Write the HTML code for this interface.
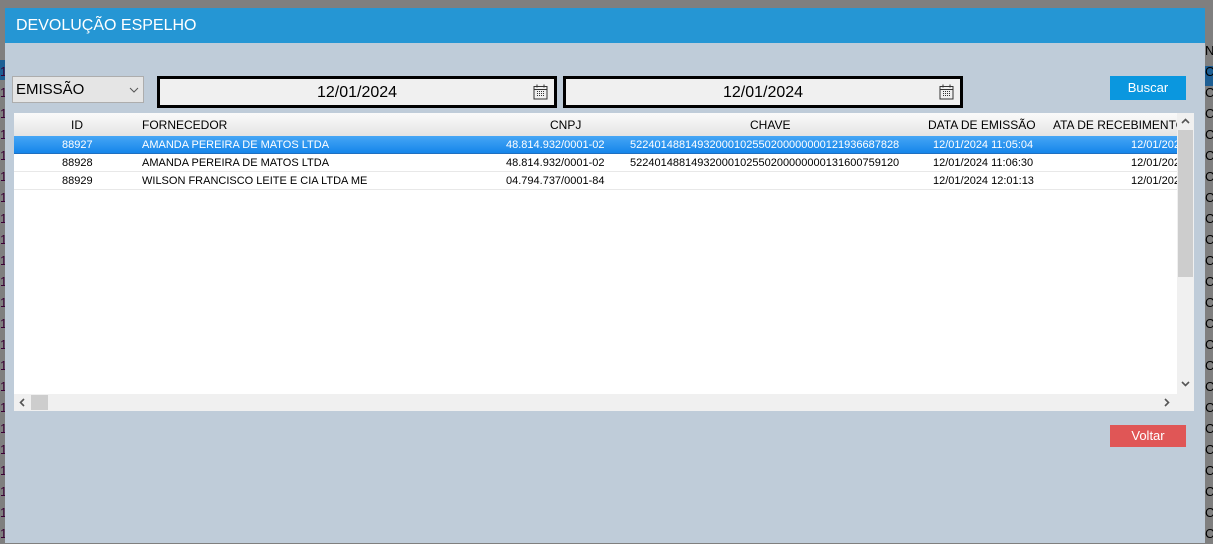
<!DOCTYPE html>
<html><head><meta charset="utf-8">
<style>
*{margin:0;padding:0;box-sizing:border-box}
body{width:1213px;height:543px;overflow:hidden;background:#7f7f7f;font-family:"Liberation Sans",sans-serif;position:relative}
.abs{position:absolute}
.dlg{left:5px;top:8px;width:1200px;height:535px;background:#bfccd9}
.title{left:5px;top:8px;width:1200px;height:35px;background:#2596d4;color:#fff;font-size:16px;line-height:35px;padding-left:11px}
.combo{left:12px;top:76px;width:132px;height:27px;background:#e5e5e5;border:1px solid #adadad;font-size:15px;line-height:25px;padding-left:3px;color:#000}
.date{top:76px;width:400px;height:32px;background:#f0f0f0;border:3px solid #000;font-size:16px;text-align:center;line-height:28px}
.btn{width:76px;height:24px;color:#fff;font-size:13px;text-align:center;line-height:24px}
.grid{left:14px;top:113px;width:1180px;height:298px;background:#fff;overflow:hidden}
.hdr{left:0;top:0;width:1163px;height:23px;background:linear-gradient(#fafafa,#e4e4e4);font-size:12px;color:#000}
.hdr span,.row span{position:absolute;white-space:nowrap}
.row{left:0;width:1163px;height:18px;font-size:11px;line-height:18px;border-bottom:1px solid #e8e8e8;color:#000}
.sel{background:linear-gradient(#46a6f5,#1585ea);color:#fff;border-bottom:1px solid #1f6fc0}
.strip{font-size:13px;color:#3a0035;line-height:21px}
</style></head><body>
<div class="abs" style="left:0;top:60px;width:5px;height:20px;background:#1e5f94"></div>
<div class="abs strip" style="left:0;top:61px;width:5px;overflow:hidden">1<br>1<br>1<br>1<br>1<br>1<br>1<br>1<br>1<br>1<br>1<br>1<br>1<br>1<br>1<br>1<br>1<br>1<br>1<br>1<br>1<br>1<br>1</div>
<div class="abs" style="left:1205px;top:66px;width:8px;height:20px;background:#1e5f94"></div>
<div class="abs strip" style="left:1205px;top:40px;width:8px;overflow:hidden;color:#000">N<br>C<br>C<br>C<br>C<br>C<br>C<br>C<br>C<br>C<br>C<br>C<br>C<br>C<br>C<br>C<br>C<br>C<br>C<br>C<br>C<br>C<br>C<br>C</div>
<div class="abs dlg"></div>
<div class="abs title">DEVOLUÇÃO ESPELHO</div>
<div class="abs combo">EMISSÃO
<svg class="abs" style="left:116px;top:10px" width="10" height="6" viewBox="0 0 10 6"><path d="M1 1 L5 5 L9 1" stroke="#555" fill="none" stroke-width="1"/></svg></div>
<div class="abs date" style="left:157px">12/01/2024
<svg class="abs" style="right:6px;top:5px" width="15" height="16" viewBox="0 0 15 16"><rect x="1" y="2.5" width="13" height="12.5" fill="none" stroke="#333"/><line x1="1" y1="5.5" x2="14" y2="5.5" stroke="#333"/><line x1="4" y1="0.5" x2="4" y2="3.5" stroke="#333"/><line x1="11" y1="0.5" x2="11" y2="3.5" stroke="#333"/><g fill="#333"><rect x="4" y="7" width="1" height="1"/><rect x="6" y="7" width="1" height="1"/><rect x="8" y="7" width="1" height="1"/><rect x="10" y="7" width="1" height="1"/><rect x="4" y="9" width="1" height="1"/><rect x="6" y="9" width="1" height="1"/><rect x="8" y="9" width="1" height="1"/><rect x="10" y="9" width="1" height="1"/><rect x="4" y="11" width="1" height="1"/><rect x="6" y="11" width="1" height="1"/><rect x="8" y="11" width="1" height="1"/><rect x="10" y="11" width="1" height="1"/></g></svg></div>
<div class="abs date" style="left:563px">12/01/2024
<svg class="abs" style="right:6px;top:5px" width="15" height="16" viewBox="0 0 15 16"><rect x="1" y="2.5" width="13" height="12.5" fill="none" stroke="#333"/><line x1="1" y1="5.5" x2="14" y2="5.5" stroke="#333"/><line x1="4" y1="0.5" x2="4" y2="3.5" stroke="#333"/><line x1="11" y1="0.5" x2="11" y2="3.5" stroke="#333"/><g fill="#333"><rect x="4" y="7" width="1" height="1"/><rect x="6" y="7" width="1" height="1"/><rect x="8" y="7" width="1" height="1"/><rect x="10" y="7" width="1" height="1"/><rect x="4" y="9" width="1" height="1"/><rect x="6" y="9" width="1" height="1"/><rect x="8" y="9" width="1" height="1"/><rect x="10" y="9" width="1" height="1"/><rect x="4" y="11" width="1" height="1"/><rect x="6" y="11" width="1" height="1"/><rect x="8" y="11" width="1" height="1"/><rect x="10" y="11" width="1" height="1"/></g></svg></div>
<div class="abs btn" style="left:1110px;top:76px;background:#0a97df">Buscar</div>
<div class="abs btn" style="left:1110px;top:425px;height:22px;line-height:22px;background:#e05656">Voltar</div>

<div class="abs grid">
 <div class="abs hdr">
  <span style="left:57px;top:5px">ID</span>
  <span style="left:128px;top:5px">FORNECEDOR</span>
  <span style="left:536px;top:5px">CNPJ</span>
  <span style="left:736px;top:5px">CHAVE</span>
  <span style="left:914px;top:5px">DATA DE EMISSÃO</span>
  <span style="left:1039px;top:5px">ATA DE RECEBIMENTO</span>
 </div>
 <div class="abs row sel" style="top:23px">
  <span style="left:48px">88927</span><span style="left:128px">AMANDA PEREIRA DE MATOS LTDA</span><span style="left:492px">48.814.932/0001-02</span><span style="left:616px">52240148814932000102550200000000121936687828</span><span style="left:919px">12/01/2024 11:05:04</span><span style="left:1117px">12/01/2024</span>
 </div>
 <div class="abs row" style="top:41px">
  <span style="left:48px">88928</span><span style="left:128px">AMANDA PEREIRA DE MATOS LTDA</span><span style="left:492px">48.814.932/0001-02</span><span style="left:616px">52240148814932000102550200000000131600759120</span><span style="left:919px">12/01/2024 11:06:30</span><span style="left:1117px">12/01/2024</span>
 </div>
 <div class="abs row" style="top:59px">
  <span style="left:48px">88929</span><span style="left:128px">WILSON FRANCISCO LEITE E CIA LTDA ME</span><span style="left:492px">04.794.737/0001-84</span><span style="left:919px">12/01/2024 12:01:13</span><span style="left:1117px">12/01/2024</span>
 </div>
 <div class="abs" style="left:1163px;top:0;width:17px;height:281px;background:#f0f0f0">
  <div class="abs" style="left:1px;top:17px;width:15px;height:147px;background:#cdcdcd"></div>
  <svg class="abs" style="left:4px;top:5px" width="9" height="6"><path d="M1 5 L4.5 1.5 L8 5" stroke="#555" stroke-width="1.6" fill="none"/></svg>
  <svg class="abs" style="left:4px;top:268px" width="9" height="6"><path d="M1 1 L4.5 4.5 L8 1" stroke="#555" stroke-width="1.6" fill="none"/></svg>
 </div>
 <div class="abs" style="left:0;top:281px;width:1180px;height:17px;background:#f0f0f0">
  <div class="abs" style="left:17px;top:1px;width:17px;height:15px;background:#cdcdcd"></div>
  <svg class="abs" style="left:5px;top:4px" width="6" height="9"><path d="M5 1 L1.5 4.5 L5 8" stroke="#555" stroke-width="1.6" fill="none"/></svg>
  <svg class="abs" style="left:1150px;top:4px" width="6" height="9"><path d="M1 1 L4.5 4.5 L1 8" stroke="#555" stroke-width="1.6" fill="none"/></svg>
 </div>
</div>
</body></html>
